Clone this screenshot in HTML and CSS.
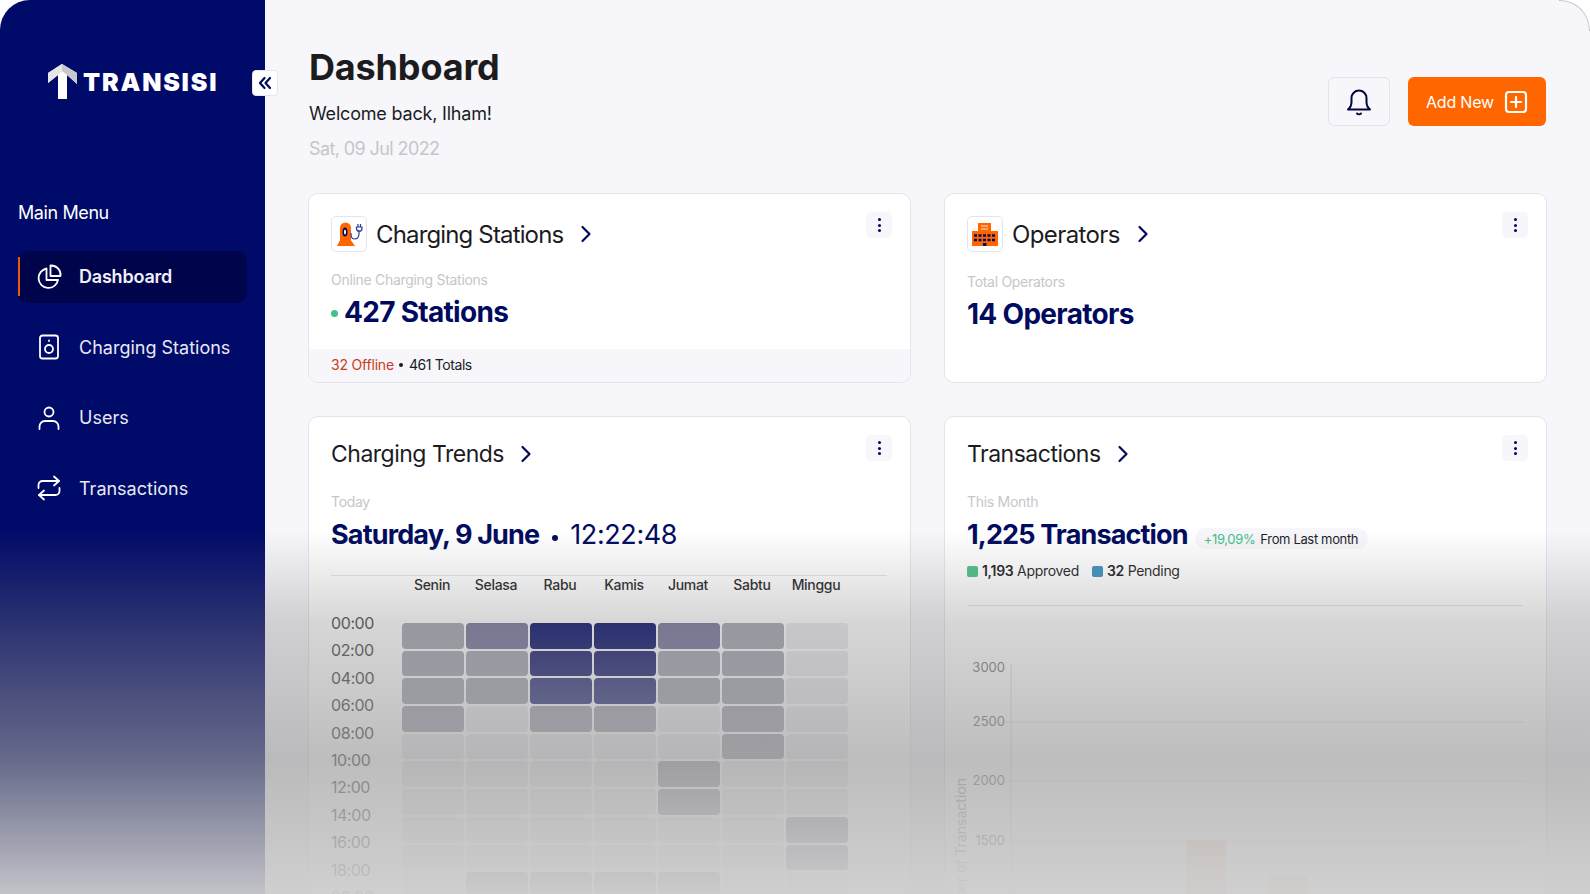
FILE: index.html
```html
<!DOCTYPE html>
<html lang="en">

<head>
    <meta charset="UTF-8">
    <meta name="viewport" content="width=device-width, initial-scale=1.0">
    <title>Transisi Dashboard</title>
    <link rel="stylesheet" href="styles.css">
</head>

<body>
    <div class="app">
        <aside class="sidebar">
            <div class="logo">
                <svg class="logo-mark" viewBox="0 0 30 36" width="30" height="36">
                    <path d="M14 0 0 9V19L10 11V35H19V11L29 20V9Z" fill="#fff" />
                    <path d="M14 0 29 9V20L19 11 14 7Z" fill="#c9c9cd" />
                    <path d="M14 0 0 9V19L10 11 14 7Z" fill="#e6e6e8" />
                </svg>
                <span class="logo-text">TRANSISI</span>
            </div>
            <button class="collapse">
                <svg viewBox="0 0 16 16" width="16" height="16" fill="none" stroke="#000a5e" stroke-width="2.200" stroke-linecap="round" stroke-linejoin="round">
                    <path d="M7.500 3 3 8l4.500 5M13 3 8.500 8l4.500 5" />
                </svg>
            </button>
            <div class="menu-title">Main Menu</div>
            <nav class="menu">
                <a class="menu-item active">
                    <svg class="menu-icon" viewBox="0 0 26 26" fill="none" stroke="#fff" stroke-width="1.800" stroke-linecap="round" stroke-linejoin="round">
                        <path d="M10.500 4.500A9.800 9.800 0 1 0 22 16H10.500Z" />
                        <path d="M14.500 1.500A9.500 9.500 0 0 1 24.500 12H14.500Z" />
                    </svg>
                    <span>Dashboard</span>
                </a>
                <a class="menu-item">
                    <svg class="menu-icon" viewBox="0 0 26 26" fill="none" stroke="#fff" stroke-width="1.800" stroke-linecap="round">
                        <rect x="4" y="1.500" width="18" height="23" rx="2.500" />
                        <circle cx="13" cy="15" r="4" />
                        <path d="M13 6.500v.5" />
                    </svg>
                    <span>Charging Stations</span>
                </a>
                <a class="menu-item">
                    <svg class="menu-icon" viewBox="0 0 26 26" fill="none" stroke="#fff" stroke-width="1.800" stroke-linecap="round">
                        <circle cx="13" cy="7" r="4.500" />
                        <path d="M3.500 24v-2.500a5.500 5.500 0 0 1 5.500-5.500h8a5.500 5.500 0 0 1 5.500 5.500V24" />
                    </svg>
                    <span>Users</span>
                </a>
                <a class="menu-item">
                    <svg class="menu-icon" viewBox="0 0 26 26" fill="none" stroke="#fff" stroke-width="1.800" stroke-linecap="round" stroke-linejoin="round">
                        <path d="M18 1.500 23 6l-5 4.500" />
                        <path d="M2.500 13v-3a4 4 0 0 1 4-4H23" />
                        <path d="M8 24.500 3 20l5-4.500" />
                        <path d="M23.500 13v3a4 4 0 0 1-4 4H3" />
                    </svg>
                    <span>Transactions</span>
                </a>
            </nav>
        </aside>

        <main class="main">
            <header class="topbar">
                <div class="heading">
                    <h1>Dashboard</h1>
                    <p class="welcome">Welcome back, Ilham!</p>
                    <p class="date">Sat, 09 Jul 2022</p>
                </div>
                <div class="actions">
                    <button class="bell">
                        <svg viewBox="0 0 26 28" width="26" height="28" fill="none" stroke="#00063f" stroke-width="2" stroke-linecap="round" stroke-linejoin="round">
                            <path d="M2 21.500c2.500-2 3.500-3.500 3.500-7.500V10a7.500 7.500 0 0 1 15 0v4c0 4 1 5.500 3.500 7.500Z" />
                            <path d="M11 25.500c1 1 3 1 4 0" />
                        </svg>
                    </button>
                    <button class="add-new">
                        <span>Add New</span>
                        <svg viewBox="0 0 24 24" width="24" height="24" fill="none" stroke="#fff" stroke-width="2.200" stroke-linecap="round">
                            <rect x="2" y="2" width="20" height="20" rx="3" />
                            <path d="M12 7v10M7 12h10" />
                        </svg>
                    </button>
                </div>
            </header>

            <section class="cards">
                <div class="card card-small">
                    <div class="card-head with-icon">
                        <span class="icon-box">
                            <svg viewBox="0 0 28 28" width="28" height="28">
                                <path d="M5 8a5.500 5.500 0 0 1 11 0V21H5Z" fill="#ff6600" />
                                <path d="M4.500 21h12l3.500 5H2Z" fill="#ff6600" />
                                <ellipse cx="10" cy="12" rx="2.500" ry="4.500" fill="#000a5e" />
                                <ellipse cx="10" cy="12" rx="1" ry="2.500" fill="#fff" />
                                <path d="M16 13c0 3 0 6 3.500 6s4.500-3 4.500-5.500V10" fill="none" stroke="#2b3a9c" stroke-width="1.200" />
                                <path d="M23 4v3M25.500 4v3M21.500 7h5.500v1.500a2.750 2.750 0 0 1-5.500 0Z" fill="none" stroke="#2b3a9c" stroke-width="1.200" />
                            </svg>
                        </span>
                        <span class="card-title title-tight">Charging Stations</span>
                        <svg class="chevron" viewBox="0 0 12 18" width="12" height="18"><path d="M2.500 2 9.500 9l-7 7" /></svg>
                        <button class="kebab"><i></i><i></i><i></i></button>
                    </div>
                    <div class="stat-label">Online Charging Stations</div>
                    <div class="stat-value"><span class="dot"></span>427 Stations</div>
                    <div class="card-foot">
                        <span class="offline">32 Offline</span>
                        <span class="bullet"></span>
                        <span class="totals">461 Totals</span>
                    </div>
                </div>

                <div class="card card-small">
                    <div class="card-head with-icon">
                        <span class="icon-box">
                            <svg viewBox="0 0 28 28" width="28" height="28">
                                <rect x="7" y="3" width="13" height="9" fill="#ff6600" />
                                <rect x="1" y="11" width="26" height="15" fill="#ff6600" />
                                <path d="M10 6h7M10 9h7" stroke="#ffe6d2" stroke-width="1.200" />
                                <path d="M3 15.500h22M3 20h22" stroke="#000a5e" stroke-width="2.500" stroke-dasharray="3 1.500" />
                                <rect x="12" y="23" width="3.500" height="3" fill="#000a5e" />
                            </svg>
                        </span>
                        <span class="card-title">Operators</span>
                        <svg class="chevron" viewBox="0 0 12 18" width="12" height="18"><path d="M2.500 2 9.500 9l-7 7" /></svg>
                        <button class="kebab"><i></i><i></i><i></i></button>
                    </div>
                    <div class="stat-label stat-label-low">Total Operators</div>
                    <div class="stat-value">14 Operators</div>
                </div>

                <div class="card card-large">
                    <div class="card-head">
                        <span class="card-title">Charging Trends</span>
                        <svg class="chevron" viewBox="0 0 12 18" width="12" height="18"><path d="M2.500 2 9.500 9l-7 7" /></svg>
                        <button class="kebab"><i></i><i></i><i></i></button>
                    </div>
                    <div class="stat-label stat-label-wide">Today</div>
                    <div class="stat-value">Saturday, 9 June<span class="value-dot"></span><span class="clock">12:22:48</span></div>
                    <hr class="rule rule-trends">
                    <div class="days">
                        <span>Senin</span><span>Selasa</span><span>Rabu</span><span>Kamis</span><span>Jumat</span><span>Sabtu</span><span>Minggu</span>
                    </div>
                    <div class="heat">
                        <div class="hours">
                            <span>00:00</span><span>02:00</span><span>04:00</span><span>06:00</span><span>08:00</span><span>10:00</span><span>12:00</span><span>14:00</span><span>16:00</span><span>18:00</span><span>20:00</span>
                        </div>
                        <div class="cells">
                            <i class="l2"></i><i class="l3"></i><i class="l6"></i><i class="l6"></i><i class="l3"></i><i class="l2"></i><i class="l1"></i>
                            <i class="l2"></i><i class="l2"></i><i class="l5"></i><i class="l5"></i><i class="l2"></i><i class="l2"></i><i class="l1"></i>
                            <i class="l2"></i><i class="l2"></i><i class="l4"></i><i class="l4"></i><i class="l2"></i><i class="l2"></i><i class="l1"></i>
                            <i class="l2"></i><i class="l1"></i><i class="l2"></i><i class="l2"></i><i class="l1"></i><i class="l2"></i><i class="l1"></i>
                            <i class="l1"></i><i class="l1"></i><i class="l1"></i><i class="l1"></i><i class="l1"></i><i class="l2"></i><i class="l1"></i>
                            <i class="l1"></i><i class="l1"></i><i class="l1"></i><i class="l1"></i><i class="l2"></i><i class="l1"></i><i class="l1"></i>
                            <i class="l1"></i><i class="l1"></i><i class="l1"></i><i class="l1"></i><i class="l2"></i><i class="l1"></i><i class="l1"></i>
                            <i class="l1"></i><i class="l1"></i><i class="l1"></i><i class="l1"></i><i class="l1"></i><i class="l1"></i><i class="l2"></i>
                            <i class="l1"></i><i class="l1"></i><i class="l1"></i><i class="l1"></i><i class="l1"></i><i class="l1"></i><i class="l2"></i>
                            <i class="l1"></i><i class="l2"></i><i class="l2"></i><i class="l2"></i><i class="l2"></i><i class="l1"></i><i class="l1"></i>
                        </div>
                    </div>
                </div>

                <div class="card card-large">
                    <div class="card-head">
                        <span class="card-title">Transactions</span>
                        <svg class="chevron" viewBox="0 0 12 18" width="12" height="18"><path d="M2.500 2 9.500 9l-7 7" /></svg>
                        <button class="kebab"><i></i><i></i><i></i></button>
                    </div>
                    <div class="stat-label stat-label-wide">This Month</div>
                    <div class="stat-row">
                        <div class="stat-value">1,225 Transaction</div>
                        <div class="pill"><span class="up">+19,09%</span>From Last month</div>
                    </div>
                    <div class="legend">
                        <span class="legend-item"><i class="sq green"></i><b>1,193</b> Approved</span>
                        <span class="legend-item"><i class="sq blue"></i><b>32</b> Pending</span>
                    </div>
                    <hr class="rule rule-trans">
                    <svg class="chart" viewBox="0 0 600 300" width="600" height="300">
                        <path class="axis" d="M66 14V300" />
                        <path class="grid" d="M60 72H580M60 131H580M60 191H580" />
                        <text x="60" y="22">3000</text>
                        <text x="60" y="76">2500</text>
                        <text x="60" y="135">2000</text>
                        <text x="60" y="195">1500</text>
                        <text class="axis-name" transform="translate(21 128) rotate(-90)">Number of Transaction</text>
                        <rect class="bar-a" x="241" y="190" width="40" height="110" rx="1" />
                        <rect class="bar-b" x="324" y="226" width="39" height="74" rx="1" />
                    </svg>
                </div>
            </section>
        </main>

        <div class="fade"></div>
    </div>
</body>

</html>
```

FILE: styles.css
```css
* {
    box-sizing: border-box;
}

body {
    margin: 0;
    background-color: #fff;
    font-family: Inter, "Open Sans", sans-serif;
    color: #1c1c1f;
}

.app {
    position: relative;
    display: flex;
    width: 1590px;
    height: 894px;
    overflow: hidden;
    border-radius: 30px 30px 0 0;
    background-color: #f6f6fb;
}

.app::after {
    content: "";
    position: absolute;
    top: 0;
    right: 0;
    width: 30px;
    height: 30px;
    border-top: 1px solid #c4c4c8;
    border-right: 1px solid #c4c4c8;
    border-top-right-radius: 30px;
}

/* sidebar */
.sidebar {
    position: relative;
    flex: 0 0 265px;
    padding: 64px 18px 0;
    background-color: #000a68;
    color: #fff;
}

.logo {
    display: flex;
    align-items: center;
    gap: 5px;
    margin-left: 30px;
}

.logo-mark {
    flex: none;
}

.logo-text {
    font-size: 25px;
    font-weight: 900;
    letter-spacing: 1.800px;
}

.collapse {
    position: absolute;
    top: 70px;
    left: 252px;
    display: flex;
    align-items: center;
    justify-content: center;
    width: 26px;
    height: 26px;
    padding: 0;
    background-color: #fff;
    border: 1px solid #e6e6ee;
    border-radius: 4px;
}

.menu-title {
    margin-top: 101px;
    font-size: 18px;
    line-height: 24px;
    letter-spacing: -0.4px;
}

.menu {
    display: flex;
    flex-direction: column;
    gap: 18.600px;
    margin-top: 25.500px;
}

.menu-item {
    position: relative;
    display: flex;
    align-items: center;
    gap: 17px;
    width: 229px;
    height: 52px;
    padding-left: 18px;
    border-radius: 10px;
    font-size: 18px;
    color: #e8e8f4;
}

.menu-item.active {
    background-color: #00044a;
    font-weight: 600;
    letter-spacing: -0.2px;
    color: #f0f0f8;
}

.menu-item.active::before {
    content: "";
    position: absolute;
    left: 0;
    top: 6px;
    bottom: 7px;
    width: 2px;
    background-color: #e8590c;
}

.menu-icon {
    flex: none;
    width: 26px;
    height: 26px;
}

/* main column */
.main {
    flex: 1;
    padding: 0 0 0 43px;
    min-width: 0;
}

.topbar {
    display: flex;
    justify-content: space-between;
    height: 193px;
    padding: 0 44px 0 1px;
}

h1 {
    margin: 44px 0 0;
    font-size: 36px;
    line-height: 46px;
    font-weight: 700;
    letter-spacing: -0.150px;
}

.welcome {
    margin: 12px 0 0;
    font-size: 18px;
    line-height: 24px;
    letter-spacing: -0.2px;
}

.date {
    margin: 11px 0 0;
    font-size: 18px;
    line-height: 24px;
    letter-spacing: -0.6px;
    color: #c6c6ca;
}

.actions {
    display: flex;
    gap: 18px;
    margin-top: 77px;
    height: 49px;
}

.bell {
    display: flex;
    align-items: center;
    justify-content: center;
    width: 62px;
    padding: 0;
    background-color: #f6f6fb;
    border: 1px solid #e3e3ea;
    border-radius: 6px;
}

.add-new {
    display: flex;
    align-items: center;
    justify-content: center;
    gap: 10px;
    width: 138px;
    padding: 0;
    background-color: #ff6600;
    border: 0;
    border-radius: 6px;
    font-family: inherit;
    font-size: 16px;
    letter-spacing: -0.2px;
    color: #fff;
}

.cards {
    display: grid;
    grid-template-columns: 603px 603px;
    gap: 33px 33px;
}

.card {
    display: flex;
    flex-direction: column;
    padding: 18px 22px 0;
    overflow: hidden;
    background-color: #fff;
    border: 1px solid #e4e4ea;
    border-radius: 10px;
}

.card > * {
    flex-shrink: 0;
}

.card-small {
    height: 190px;
}

.card-large {
    height: 520px;
}

.card-head {
    display: flex;
    align-items: center;
    height: 38px;
}

.card-head.with-icon {
    height: 36px;
    margin-top: 4px;
}

.icon-box {
    display: flex;
    align-items: center;
    justify-content: center;
    width: 36px;
    height: 36px;
    margin-right: 9px;
    border: 1px solid #e4e4ea;
    border-radius: 5px;
}

.card-title {
    font-size: 23px;
    letter-spacing: -0.5px;
}

.with-icon .card-title {
    font-size: 24px;
    letter-spacing: -0.6px;
}

.with-icon .title-tight {
    letter-spacing: -0.850px;
}

.chevron {
    margin-left: 16px;
    fill: none;
    stroke: #000a5e;
    stroke-width: 2.200;
    stroke-linecap: round;
    stroke-linejoin: round;
}

.with-icon .chevron {
    margin-left: 17px;
}

.kebab {
    display: flex;
    flex-direction: column;
    align-items: center;
    justify-content: center;
    gap: 2.500px;
    width: 26px;
    height: 26px;
    margin-left: auto;
    margin-right: -4px;
    padding: 0;
    align-self: flex-start;
    background-color: #f6f6fb;
    border: 0;
    border-radius: 5px;
}

.with-icon .kebab {
    margin-top: -4px;
}

.kebab i {
    width: 3px;
    height: 3px;
    border-radius: 50%;
    background-color: #000a5e;
}

.stat-label {
    margin-top: 19px;
    font-size: 14px;
    line-height: 18px;
    letter-spacing: -0.3px;
    color: #c6c6ca;
}

.stat-label-low {
    margin-top: 21px;
}

.stat-label-wide {
    margin-top: 20px;
}

.stat-value {
    margin-top: 6px;
    font-size: 27px;
    line-height: 36px;
    font-weight: 700;
    letter-spacing: -0.850px;
    color: #000a5e;
    white-space: nowrap;
}

.card-small .stat-value {
    margin-top: 5px;
    font-size: 28px;
    letter-spacing: -0.700px;
}

.dot {
    display: inline-block;
    width: 7px;
    height: 7px;
    margin-right: 6px;
    vertical-align: 5px;
    border-radius: 50%;
    background-color: #3fc086;
}

.value-dot {
    display: inline-block;
    width: 6px;
    height: 6px;
    margin: 0 12px 0 13px;
    vertical-align: 3px;
    border-radius: 50%;
    background-color: #000a5e;
}

.clock {
    font-weight: 400;
    letter-spacing: -0.4px;
}

.card-foot {
    display: flex;
    align-items: center;
    gap: 5px;
    height: 33px;
    margin: auto -22px 0;
    padding: 0 0 2px 22px;
    background-color: #f6f6fb;
    font-size: 14px;
    letter-spacing: -0.2px;
}

.totals {
    margin-left: 1px;
    letter-spacing: -0.4px;
}

.offline {
    color: #cc3a21;
}

.bullet {
    width: 4px;
    height: 4px;
    border-radius: 50%;
    background-color: #1c1c1f;
}

.rule {
    margin: 0;
    height: 1px;
    border: 0;
    background-color: #e4e4ea;
}

.rule-trends {
    margin-top: 22px;
    width: 556px;
}

.rule-trans {
    margin-top: 25px;
    width: 556px;
}

/* heat map */
.days {
    display: grid;
    grid-template-columns: repeat(7, 64px);
    margin: 0 0 0 69px;
    height: 18px;
    font-size: 14px;
    line-height: 18px;
    font-weight: 500;
    text-align: center;
    letter-spacing: -0.3px;
}

.heat {
    display: flex;
    margin-top: 29px;
}

.hours {
    display: flex;
    flex-direction: column;
    gap: 5.400px;
    width: 71px;
    margin-top: -11px;
    font-size: 16px;
    line-height: 22px;
    letter-spacing: -0.4px;
    color: #44444a;
}

.cells {
    display: grid;
    grid-template-columns: repeat(7, 61.500px);
    grid-auto-rows: 25.700px;
    gap: 2px 2.500px;
}

.cells i {
    border-radius: 4px;
}

.l1 {
    background-color: #e9e9ee;
}

.l2 {
    background-color: #a2a2b0;
}

.l3 {
    background-color: #72729a;
}

.l4 {
    background-color: #292c7a;
}

.l5 {
    background-color: #12156c;
}

.l6 {
    background-color: #000866;
}

/* transactions */
.stat-row {
    display: flex;
    align-items: flex-end;
    gap: 7px;
}

.pill {
    display: flex;
    align-items: center;
    gap: 5px;
    height: 21px;
    margin-bottom: 4px;
    padding: 0 10px 0 9px;
    border-radius: 11px;
    background-color: #f6f6fb;
    font-size: 13px;
    letter-spacing: -0.350px;
    white-space: nowrap;
}

.up {
    color: #3fc086;
}

.legend {
    display: flex;
    gap: 13px;
    margin-top: 9px;
    font-size: 14px;
    line-height: 18px;
    letter-spacing: -0.3px;
}

.legend-item {
    display: flex;
    align-items: center;
    white-space: pre;
}

.sq {
    width: 11px;
    height: 11px;
    margin-right: 4px;
    border-radius: 2px;
}

.green {
    background-color: #4cbf88;
}

.blue {
    background-color: #3a90c0;
}

.legend b {
    font-weight: 600;
}

.chart {
    margin: 44px 0 0 -22px;
}

.chart text {
    font-size: 13px;
    text-anchor: end;
    fill: #77777c;
}

.chart .axis-name {
    font-size: 14px;
    fill: #a4a4a8;
}

.axis {
    stroke: #dcdce2;
    stroke-width: 1;
    fill: none;
}

.grid {
    stroke: #e8e8ee;
    stroke-width: 1;
    fill: none;
}

.bar-a {
    fill: #f9d9c8;
}

.bar-b {
    fill: #fcd6b4;
}

/* grey fade over the bottom of the page */
.fade {
    position: absolute;
    left: 0;
    right: 0;
    top: 530px;
    bottom: 0;
    pointer-events: none;
    background: linear-gradient(to bottom,
        rgba(130, 130, 130, 0) 0,
        rgba(130, 130, 130, 0.32) 90px,
        rgba(155, 155, 155, 0.66) 230px,
        rgba(205, 205, 205, 0.95) 364px);
}
```
